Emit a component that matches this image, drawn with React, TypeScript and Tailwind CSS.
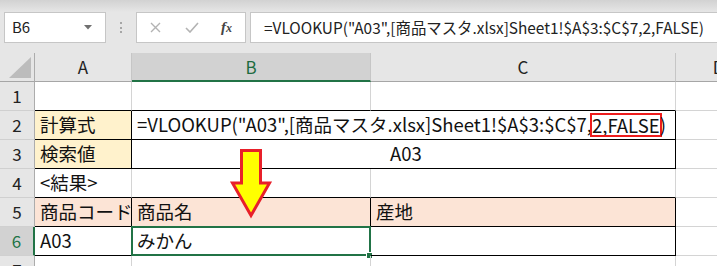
import clsx from "clsx";
import type { ReactNode } from "react";

const GRID = "border-r-[#d4d4d4] border-b-[#d4d4d4]";

function Cell({ children, className }: { children?: ReactNode; className?: string }) {
  return (
    <div
      className={clsx(
        "relative flex items-center overflow-hidden whitespace-nowrap border-r border-b pl-[5px] text-[18.5px] text-[#111]",
        className
      )}
    >
      {children}
    </div>
  );
}

function ColHead({ label, selected }: { label: string; selected?: boolean }) {
  return (
    <div
      className={clsx(
        "flex items-center justify-center border-r border-r-[#c6c6c6] text-[17px]",
        selected
          ? "bg-[#d2d2d2] border-b-2 border-b-[#217346] text-[#1d6b3f]"
          : "bg-[#e6e6e6] border-b border-b-[#a6a6a6] text-[#222]"
      )}
    >
      {label}
    </div>
  );
}

function RowHead({ n, selected }: { n: number; selected?: boolean }) {
  return (
    <div
      className={clsx(
        "flex items-center justify-center border-b border-b-[#d0d0d0] text-[17px]",
        selected
          ? "bg-[#d2d2d2] border-r-2 border-r-[#217346] text-[#217346]"
          : "bg-[#e6e6e6] border-r border-r-[#acacac] text-[#222]"
      )}
    >
      {n}
    </div>
  );
}

function FormulaBar() {
  return (
    <div className="flex h-[53px] flex-col bg-[#e6e6e6]">
      <div className="h-[12px] bg-linear-to-b from-[#d2d2d2] to-[#e6e6e6]" />
      <div className="flex h-[31px] items-stretch">
        {/* name box */}
        <div className="ml-[4px] flex w-[102px] shrink-0 items-center justify-between border border-[#c6c6c6] bg-white pl-[7px] pr-[13px]">
          <span className="text-[15px] text-[#222]">B6</span>
          <svg width="8" height="5" viewBox="0 0 8 5">
            <polygon points="0,0 8,0 4,4.5" fill="#707070" />
          </svg>
        </div>
        <div className="flex w-[30px] shrink-0 flex-col items-center justify-center gap-[2.5px]">
          <span className="h-[2px] w-[2px] bg-[#a6a6a6]" />
          <span className="h-[2px] w-[2px] bg-[#a6a6a6]" />
          <span className="h-[2px] w-[2px] bg-[#a6a6a6]" />
        </div>
        {/* cancel / enter / fx */}
        <div className="flex w-[110px] shrink-0 items-center border border-[#c6c6c6] bg-white">
          <svg className="ml-[13px]" width="11" height="11" viewBox="0 0 11 11">
            <path d="M1 1L10 10M10 1L1 10" stroke="#b3b3b3" strokeWidth="1.4" />
          </svg>
          <svg className="ml-[24px]" width="14" height="11" viewBox="0 0 14 11">
            <path d="M1 6L5 10L13 1" stroke="#b3b3b3" strokeWidth="1.6" fill="none" />
          </svg>
          <span className="ml-[22px] font-['Liberation_Serif',serif] text-[15px] font-bold italic text-[#444]">
            f<span className="text-[12px]">x</span>
          </span>
        </div>
        <div className="ml-[4px] flex w-[520px] shrink-0 items-center whitespace-nowrap border border-[#c6c6c6] bg-white pl-[13px] text-[15.4px] text-[#222]">
          =VLOOKUP("A03",[商品マスタ.xlsx]Sheet1!$A$3:$C$7,2,FALSE)
        </div>
      </div>
      <div className="h-[10px]" />
    </div>
  );
}

export default function App() {
  return (
    <div className="relative h-[266px] w-[717px] overflow-hidden bg-white font-['Noto_Sans_CJK_JP',sans-serif]">
      <FormulaBar />

      <div className="grid w-[762px] grid-cols-[35px_97px_239px_305px_86px] auto-rows-[29px]">
        {/* header row */}
        <div className="relative border-r border-b border-r-[#acacac] border-b-[#a6a6a6] bg-[#e6e6e6]">
          <svg className="absolute right-[3px] bottom-[3px]" width="22" height="21" viewBox="0 0 22 21">
            <polygon points="22,0 22,21 0,21" fill="#bcbcbc" />
          </svg>
        </div>
        <ColHead label="A" />
        <ColHead label="B" selected />
        <ColHead label="C" />
        <ColHead label="D" />

        {/* row 1 */}
        <RowHead n={1} />
        <Cell className="border-r-[#d4d4d4] border-b-black" />
        <Cell className="border-r-[#d4d4d4] border-b-black" />
        <Cell className="border-r-[#d4d4d4] border-b-black" />
        <Cell className={GRID} />

        {/* row 2 */}
        <RowHead n={2} />
        <Cell className="border-r-black border-b-black bg-[#fff2cc]">計算式</Cell>
        <Cell className="col-span-2 border-r-black border-b-black">
          =VLOOKUP("A03",[商品マスタ.xlsx]Sheet1!$A$3:$C$7,
          <span className="inline-block leading-[20px] outline-2 outline-[#ee1c1c]">2,FALSE</span>)
        </Cell>
        <Cell className={GRID} />

        {/* row 3 */}
        <RowHead n={3} />
        <Cell className="border-r-black border-b-black bg-[#fff2cc]">検索値</Cell>
        <Cell className="col-span-2 justify-center border-r-black border-b-black">A03</Cell>
        <Cell className={GRID} />

        {/* row 4 */}
        <RowHead n={4} />
        <Cell className="border-r-[#d4d4d4] border-b-black">&lt;結果&gt;</Cell>
        <Cell className="border-r-[#d4d4d4] border-b-black" />
        <Cell className="border-r-[#d4d4d4] border-b-black" />
        <Cell className={GRID} />

        {/* row 5 */}
        <RowHead n={5} />
        <Cell className="border-r-black border-b-black bg-[#fce4d6]">商品コード</Cell>
        <Cell className="border-r-black border-b-black bg-[#fce4d6]">商品名</Cell>
        <Cell className="border-r-black border-b-black bg-[#fce4d6]">産地</Cell>
        <Cell className={GRID} />

        {/* row 6 */}
        <RowHead n={6} selected />
        <Cell className="border-r-black border-b-black">A03</Cell>
        <Cell className="overflow-visible border-r-black border-b-black">
          みかん
          <div className="pointer-events-none absolute -inset-[1px] border-2 border-[#217346]" />
          <div className="absolute right-[-3px] bottom-[-4px] h-[7px] w-[7px] border border-white bg-[#217346]" />
        </Cell>
        <Cell className="border-r-black border-b-black" />
        <Cell className={GRID} />

        {/* row 7 */}
        <RowHead n={7} />
        <Cell className={GRID} />
        <Cell className={GRID} />
        <Cell className={GRID} />
        <Cell className={GRID} />
      </div>

      {/* arrow callout */}
      <svg className="absolute top-[146px] left-[228px]" width="46" height="74" viewBox="0 0 46 74">
        <polygon
          points="13.5,4.5 32.5,4.5 32.5,37 41.5,37 23,69.5 4.5,37 13.5,37"
          fill="#ffff00"
          stroke="#e8202a"
          strokeWidth="3"
          strokeLinejoin="miter"
        />
      </svg>
    </div>
  );
}
